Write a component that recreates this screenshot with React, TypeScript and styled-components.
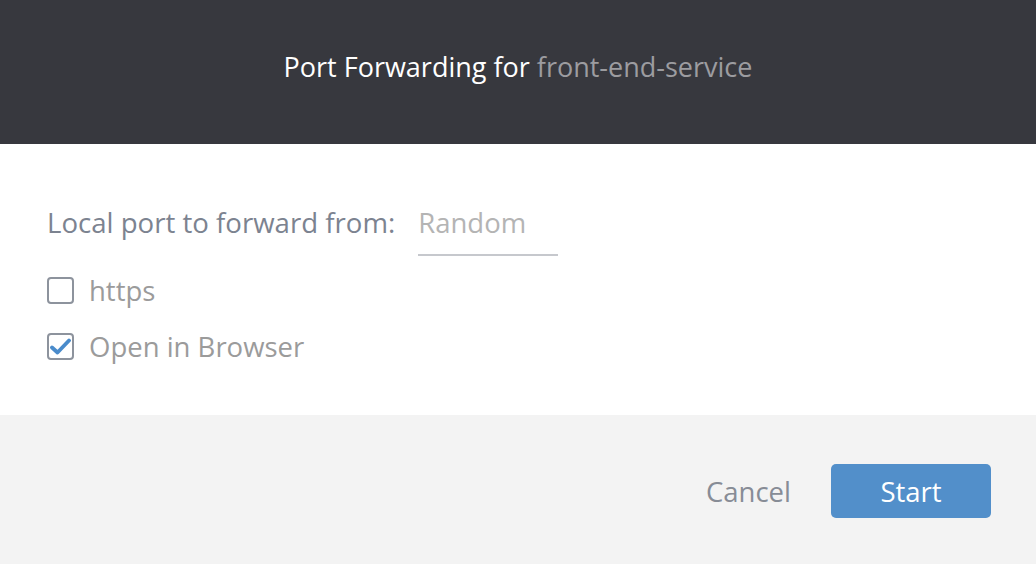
import React from "react";
import styled, { createGlobalStyle } from "styled-components";

const Global = createGlobalStyle`
  html, body { margin: 0; padding: 0; background: #ffffff; }
  body { font-family: "Open Sans", "Liberation Sans", sans-serif; -webkit-font-smoothing: antialiased; }
  * { box-sizing: border-box; }
`;

const Dialog = styled.div`
  width: 1036px;
  height: 564px;
  display: flex;
  flex-direction: column;
  background: #ffffff;
`;

const Header = styled.header`
  height: 144px;
  flex: none;
  background: #37383e;
  display: flex;
  align-items: center;
  justify-content: center;
  padding-bottom: 10px;
`;

const Title = styled.h1`
  margin: 0;
  font-size: 27px;
  font-weight: 400;
  color: #ffffff;
  line-height: 36px;
`;

const Muted = styled.span`
  color: #9c9ca0;
`;

const Body = styled.section`
  flex: 1;
  padding: 52px 47px 0;
  display: flex;
  flex-direction: column;
`;

const FieldRow = styled.div`
  display: flex;
  align-items: flex-start;
  gap: 23px;
  margin-bottom: 6px;
`;

const Label = styled.label`
  font-size: 27.6px;
  line-height: 52px;
  color: #7c8390;
`;

const PortInput = styled.input`
  width: 140px;
  height: 60px;
  border: none;
  border-bottom: 2px solid #c6c8cd;
  padding: 0 0 6px;
  font-family: inherit;
  font-size: 27.5px;
  color: #555;
  background: transparent;
  outline: none;
  &::placeholder { color: #b4b4b4; }
`;

const CheckRow = styled.label`
  display: flex;
  align-items: center;
  gap: 15px;
  height: 56px;
  font-size: 27.5px;
  color: #9b9b9b;
`;

const Box = styled.span<{ $checked?: boolean }>`
  width: 27px;
  height: 27px;
  border: 2px solid #8d939d;
  border-radius: 4px;
  display: flex;
  align-items: center;
  justify-content: center;
  background: #fff;
`;

const Footer = styled.footer`
  height: 149px;
  flex: none;
  background: #f3f3f3;
  display: flex;
  align-items: center;
  justify-content: flex-end;
  gap: 40px;
  padding: 3px 45px 0 0;
`;

const CancelButton = styled.button`
  border: none;
  background: transparent;
  font-family: inherit;
  font-size: 27.5px;
  color: #878c96;
  padding: 0;
  cursor: pointer;
`;

const StartButton = styled.button`
  width: 160px;
  height: 54px;
  border: none;
  border-radius: 5px;
  background: #528fca;
  color: #ffffff;
  font-family: inherit;
  font-size: 27.5px;
  cursor: pointer;
`;

function Checkbox({ checked, label }: { checked?: boolean; label: string }) {
  return (
    <CheckRow>
      <Box $checked={checked}>
        {checked && (
          <svg width="21" height="17" viewBox="0 0 21 17">
            <path d="M2 9.5 L7.5 14.5 L19 2.5" fill="none" stroke="#4a8bcb" strokeWidth="3.8" strokeLinecap="round" strokeLinejoin="round" />
          </svg>
        )}
      </Box>
      {label}
    </CheckRow>
  );
}

export default function App() {
  return (
    <>
      <Global />
      <Dialog>
        <Header>
          <Title>
            Port Forwarding for <Muted>front-end-service</Muted>
          </Title>
        </Header>
        <Body>
          <FieldRow>
            <Label>Local port to forward from:</Label>
            <PortInput placeholder="Random" />
          </FieldRow>
          <Checkbox label="https" />
          <Checkbox checked label="Open in Browser" />
        </Body>
        <Footer>
          <CancelButton>Cancel</CancelButton>
          <StartButton>Start</StartButton>
        </Footer>
      </Dialog>
    </>
  );
}
